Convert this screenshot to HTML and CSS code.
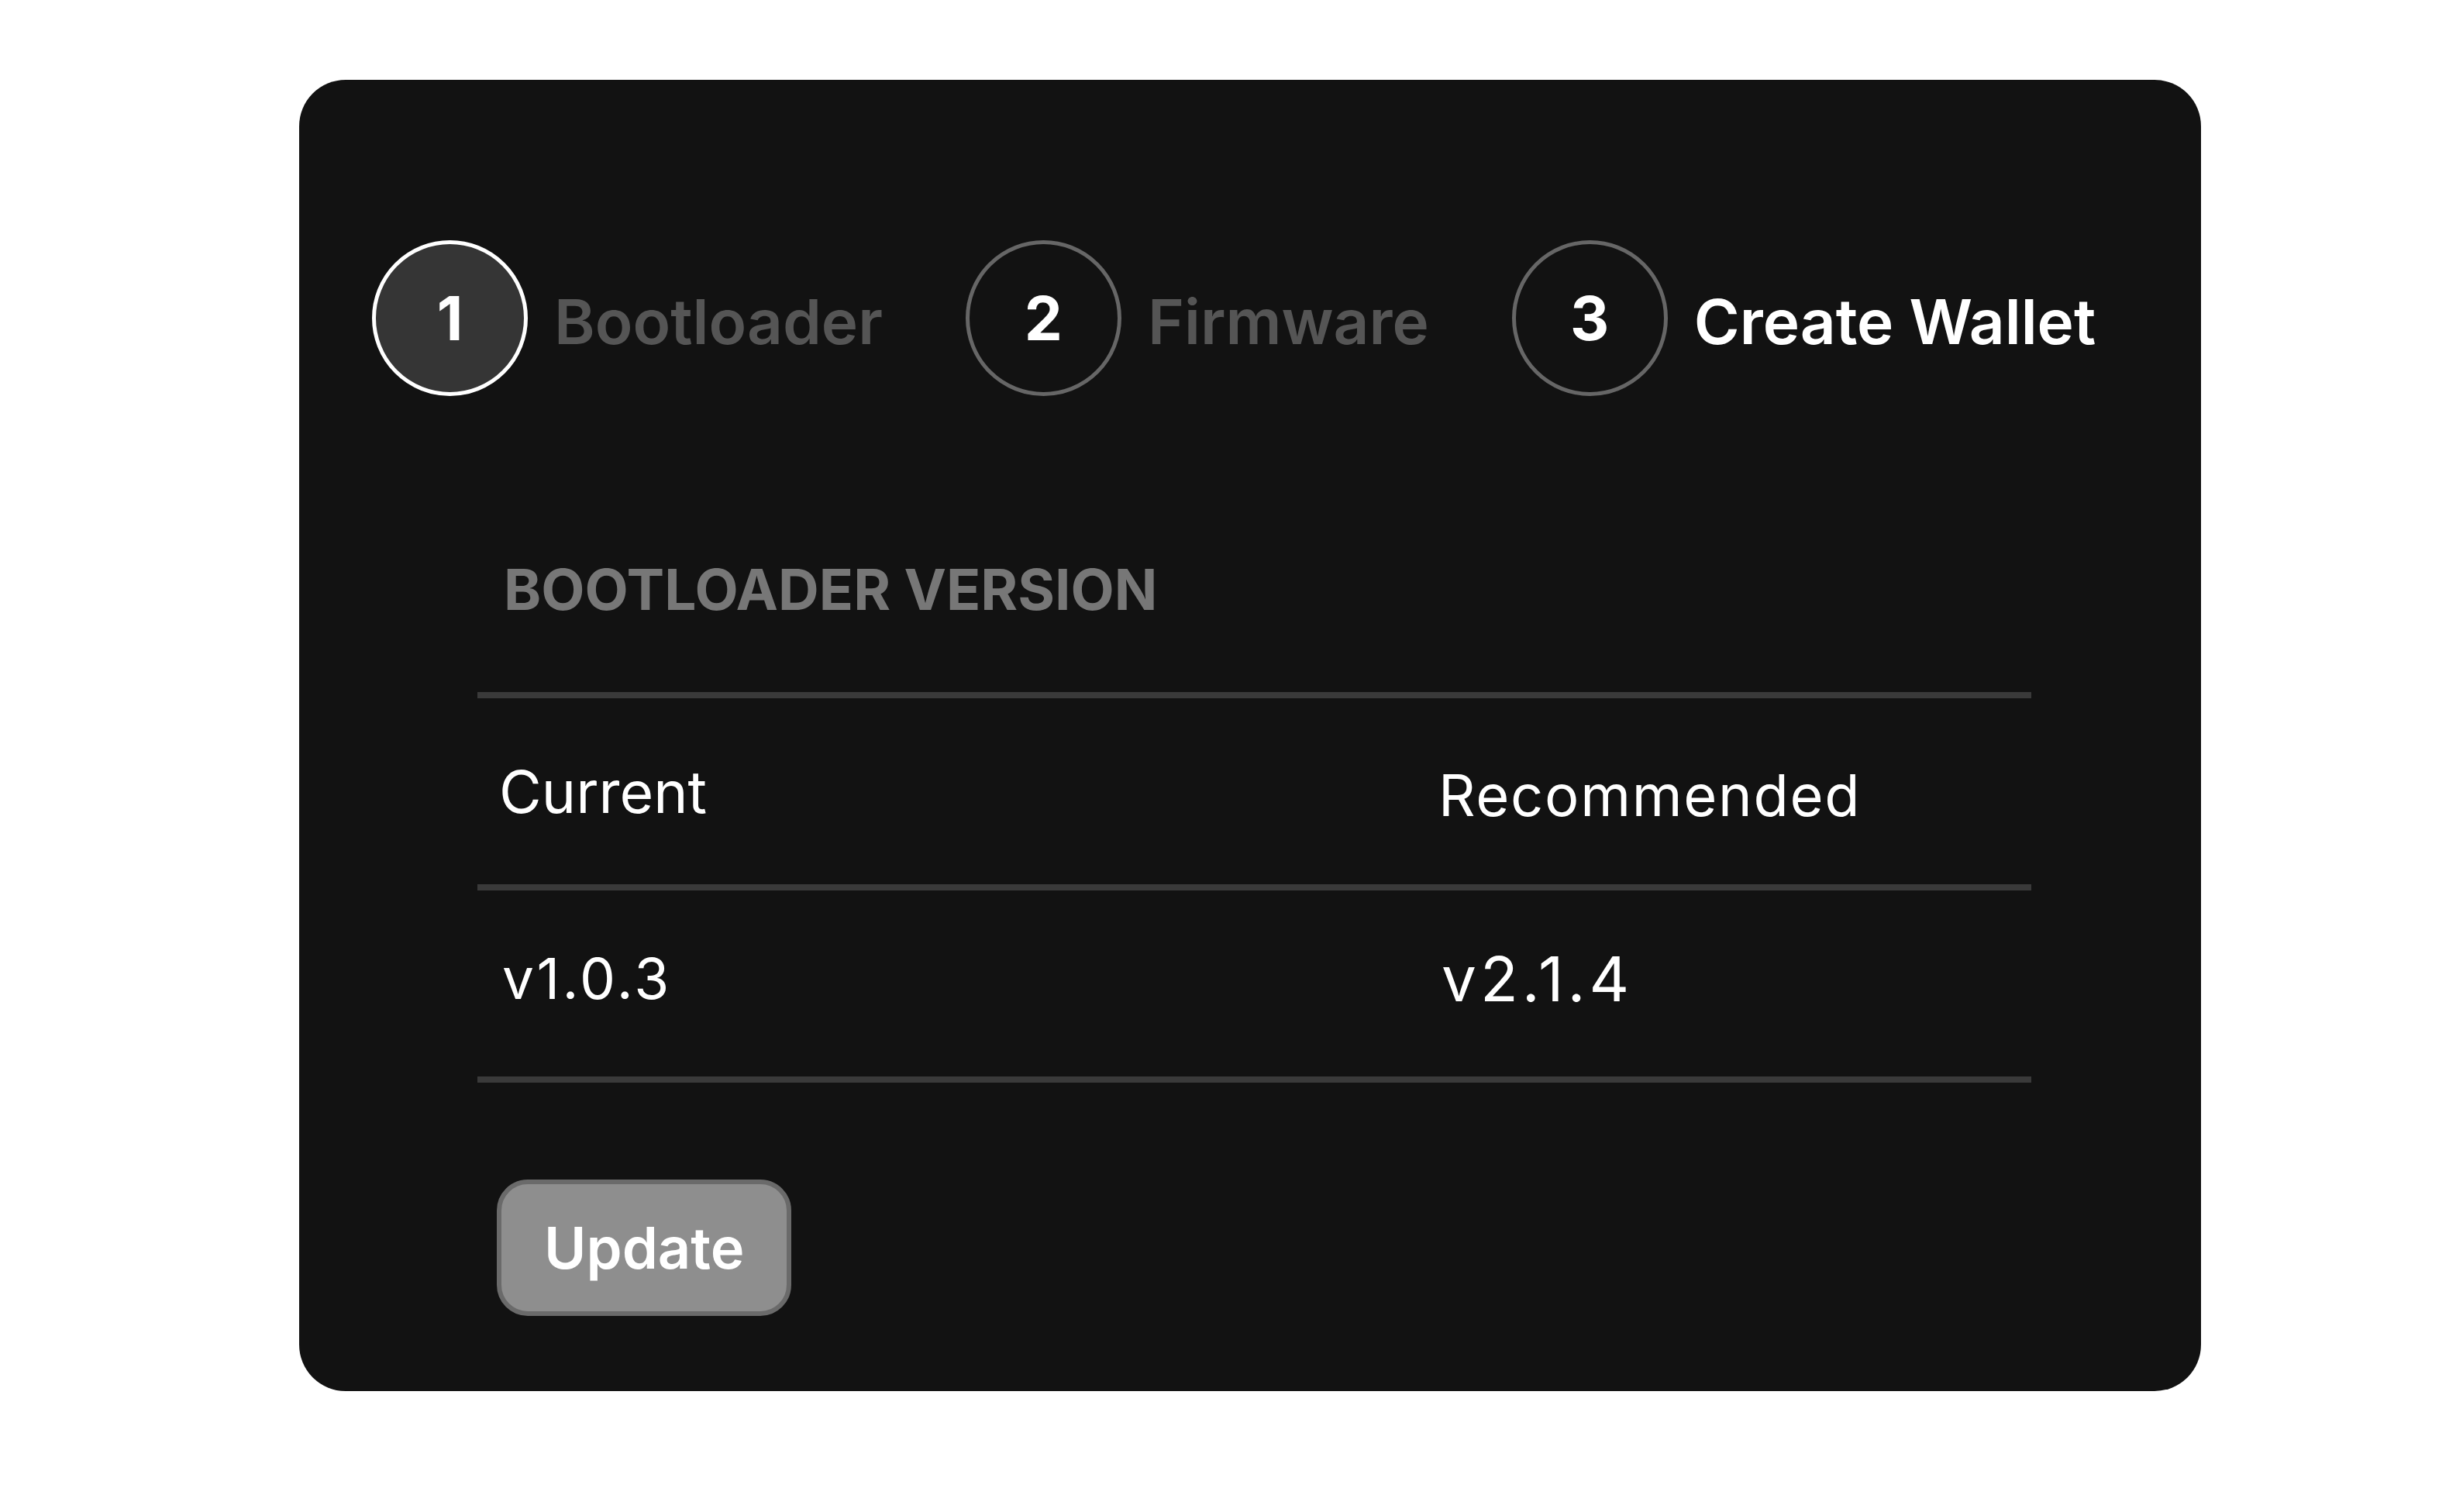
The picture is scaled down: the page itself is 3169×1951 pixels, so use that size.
FILE: index.html
```html
<!DOCTYPE html>
<html lang="en">
<head>
<meta charset="utf-8">
<title>Bootloader Update</title>
<link rel="stylesheet" href="styles.css">
</head>
<body>
<div class="card">
  <div class="steps">
    <div class="step step-active">
      <div class="num">1</div>
      <div class="label">Bootloader</div>
    </div>
    <div class="step">
      <div class="num">2</div>
      <div class="label">Firmware</div>
    </div>
    <div class="step step-next">
      <div class="num">3</div>
      <div class="label">Create Wallet</div>
    </div>
  </div>
  <div class="section">
    <h2 class="heading">BOOTLOADER VERSION</h2>
    <div class="table">
      <div class="row">
        <div class="cell cell-cur">Current</div>
        <div class="cell cell-rec">Recommended</div>
      </div>
      <div class="row">
        <div class="cell cell-val">v1.0.3</div>
        <div class="cell cell-val cell-val2">v2.1.4</div>
      </div>
    </div>
    <button class="btn">Update</button>
  </div>
</div>
</body>
</html>
```
FILE: styles.css
```css
html, body {
  margin: 0;
  padding: 0;
  background: #ffffff;
}
body {
  font-family: Inter, "Liberation Sans", sans-serif;
  padding: 103px 0 0 386px;
}
.card {
  width: 2454px;
  box-sizing: border-box;
  background: #121212;
  border-radius: 60px;
  padding: 207px 0 97px 0;
}
.steps {
  display: flex;
  align-items: center;
  gap: 107px;
  padding-left: 94px;
}
.step {
  display: flex;
  align-items: center;
  gap: 34px;
}
.num {
  width: 201px;
  height: 201px;
  box-sizing: border-box;
  border-radius: 50%;
  border: 5px solid #666666;
  display: flex;
  align-items: center;
  justify-content: center;
  color: #ffffff;
  font-weight: 700;
  font-size: 78px;
}
.step-active .num {
  background: #353535;
  border-color: #ffffff;
}
.label {
  font-size: 80px;
  font-weight: 600;
  color: #555555;
  padding-top: 8px;
}
.step-next .label {
  color: #ffffff;
}
.section {
  width: 2005px;
  margin: 205px 0 0 230px;
}
.heading {
  margin: 0;
  font-size: 73px;
  font-weight: 700;
  color: #777777;
  padding-left: 34px;
  line-height: normal;
}
.table {
  margin-top: 88px;
}
.row {
  display: grid;
  grid-template-columns: 1212px 1fr;
  height: 240px;
  border-top: 8px solid #3a3a3a;
  align-items: center;
}
.row:last-child {
  border-bottom: 8px solid #3a3a3a;
}
.cell {
  padding-left: 28px;
  font-size: 75px;
  color: #ffffff;
}
.cell-rec {
  font-size: 74px;
  letter-spacing: 1.7px;
  padding-top: 10px;
}
.cell-val {
  font-size: 73px;
  letter-spacing: 3.4px;
  padding-left: 32px;
  padding-bottom: 14px;
}
.cell-val2 {
  font-size: 80px;
  letter-spacing: 5px;
}
.btn {
  margin: 125px 0 0 25px;
  font-family: Inter, "Liberation Sans", sans-serif;
  font-size: 74px;
  font-weight: 600;
  color: #ffffff;
  background: #8e8e8e;
  border: 6px solid #6a6a6a;
  border-radius: 40px;
  padding: 37px 55px;
  line-height: normal;
}
```
